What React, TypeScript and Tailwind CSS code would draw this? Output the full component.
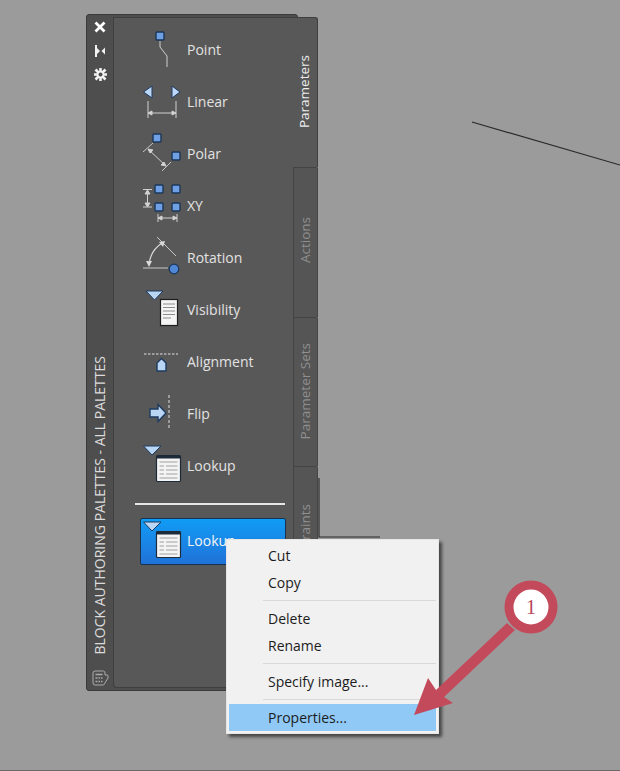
import React from 'react';

const BlueSquare = ({ x, y }: { x: number; y: number }) => (
  <rect x={x - 4} y={y - 4} width={8} height={8} rx={1} fill="#6fa0e6" stroke="#1a3658" strokeWidth={1.4} />
);

const PointIcon = () => (
  <Svg>
    <polyline points="20,17 20,23 27,32 27,43" fill="none" stroke="#cfcfcf" strokeWidth={1} />
    <BlueSquare x={20} y={12} />
  </Svg>
);

const LinearIcon = () => (
  <Svg>
    <path d="M3.5 16 L12 10 V22 Z M40 16 L32 10 V22 Z" fill="#bcd8f6" stroke="#1d3a5e" strokeWidth={1} />
    <path d="M8 25 V42 M36 25 V42 M8 37 H36 M8 37 l4 -2 v4 Z M36 37 l-4 -2 v4 Z" fill="#d8d8d8" stroke="#d0d0d0" strokeWidth={1} />
  </Svg>
);

const PolarIcon = () => (
  <Svg>
    <path d="M3 24 L13 15 M22 43 L31 34" stroke="#c8c8c8" strokeWidth={1} />
    <path d="M8 21 L26 38 M8 21 l5 1 l-3 3 Z M26 38 l-5 -1 l3 -3 Z" fill="#d8d8d8" stroke="#d0d0d0" strokeWidth={1} />
    <BlueSquare x={17} y={10} />
    <BlueSquare x={36} y={28} />
  </Svg>
);

const XYIcon = () => (
  <Svg>
    <path d="M3 9.5 H12 M3 27 H12 M7.5 9.5 V27 M7.5 10 l-2.5 4 h5 Z M7.5 27 l-2.5 -4 h5 Z" fill="#d8d8d8" stroke="#d0d0d0" strokeWidth={1} />
    <path d="M18 34 V42 M37 34 V42 M18 38 H37 M18 38 l4 -2 v4 Z M37 38 l-4 -2 v4 Z" fill="#d8d8d8" stroke="#d0d0d0" strokeWidth={1} />
    <BlueSquare x={19} y={9} />
    <BlueSquare x={36} y={9} />
    <BlueSquare x={19} y={27} />
    <BlueSquare x={36} y={27} />
  </Svg>
);

const RotationIcon = () => (
  <Svg>
    <path d="M3 36 H28 M17 5 L36 24" stroke="#c8c8c8" strokeWidth={1} fill="none" />
    <path d="M22 11 Q10 19 9 33" stroke="#d8d8d8" strokeWidth={1.2} fill="none" />
    <path d="M25 9 L19 10 L23 15 Z M9 35 L6 29 H12 Z" fill="#d8d8d8" />
    <circle cx={34} cy={37} r={4.8} fill="#4f86d6" stroke="#1a3658" strokeWidth={1.2} />
  </Svg>
);

const VisibilityIcon = () => (
  <Svg>
    <path d="M6 7 H23 L14.5 16 Z" fill="#b9d6f5" stroke="#1d3a5e" strokeWidth={1} />
    <rect x={20.5} y={15.5} width={17} height={26} fill="#f4f4f4" stroke="#1d1d1d" strokeWidth={1.2} />
    <path d="M23 20 H35 M23 23.5 H35 M23 27 H35 M23 30.5 H35 M23 34 H31" stroke="#8c8c8c" strokeWidth={1} />
  </Svg>
);

const AlignmentIcon = () => (
  <Svg>
    <path d="M4 18 H38" stroke="#e0e0e0" strokeWidth={1} strokeDasharray="2.5 1.5" />
    <path d="M17 35 V27 L21.5 22.5 L26 27 V35 Z" fill="#b9d6f5" stroke="#1d3a5e" strokeWidth={1.4} />
  </Svg>
);

const FlipIcon = () => (
  <Svg>
    <path d="M29 7 V41" stroke="#e0e0e0" strokeWidth={1} strokeDasharray="3 2" />
    <path d="M10 21 H18 V16.5 L26 25 L18 33.5 V29 H10 Z" fill="#b9d6f5" stroke="#1d3a5e" strokeWidth={1.4} />
  </Svg>
);

const LookupIcon = () => (
  <Svg>
    <path d="M3.5 6 H21 L12 15 Z" fill="#b9d6f5" stroke="#1d3a5e" strokeWidth={1} />
    <rect x={16.5} y={15.5} width={24} height={26} rx={1} fill="#f4f4f4" stroke="#1d2a38" strokeWidth={1.2} />
    <rect x={16.5} y={15.5} width={24} height={3} fill="#1d2a38" />
    <path d="M19.5 22 H37.5 M19.5 26 H24 M26 26 H37.5 M19.5 30 H24 M26 30 H37.5 M19.5 34 H24 M26 34 H37.5 M19.5 38 H37.5" stroke="#a0a0a0" strokeWidth={1} />
  </Svg>
);

const Svg = ({ children }: { children: React.ReactNode }) => (
  <svg width={47} height={52} viewBox="0 0 47 52" className="shrink-0">
    {children}
  </svg>
);

const items = [
  { label: 'Point', icon: <PointIcon /> },
  { label: 'Linear', icon: <LinearIcon /> },
  { label: 'Polar', icon: <PolarIcon /> },
  { label: 'XY', icon: <XYIcon /> },
  { label: 'Rotation', icon: <RotationIcon /> },
  { label: 'Visibility', icon: <VisibilityIcon /> },
  { label: 'Alignment', icon: <AlignmentIcon /> },
  { label: 'Flip', icon: <FlipIcon /> },
  { label: 'Lookup', icon: <LookupIcon /> },
];

const SideTab = ({ label, className }: { label: string; className: string }) => (
  <div className={`flex w-[25px] shrink-0 justify-center rounded-tr-[2px] border-t border-r border-l border-[#444444] bg-[#555555] ${className}`}>
    <span className="rotate-180 self-start whitespace-nowrap text-[13.5px] leading-none text-[#8f8f8f] [writing-mode:vertical-rl]">{label}</span>
  </div>
);

const MenuItem = ({ label, active }: { label: string; active?: boolean }) => (
  <div className={`flex h-[27px] items-center pb-[1px] pl-[39px] text-[14px] text-[#1c1c1c] ${active ? 'bg-[#90c8f6]' : ''}`}>{label}</div>
);

const MenuSeparator = () => (
  <div className="flex h-[9px] items-center pl-[34px]">
    <div className="h-px w-full bg-[#d9d9d9]" />
  </div>
);

export default function App() {
  return (
    <div className="relative h-[771px] w-[620px] overflow-hidden border-b border-[#6a6a6a] bg-[#9b9b9b] font-['Open_Sans','Noto_Sans',sans-serif]">
      {/* drawing lines behind the palette */}
      <svg width={620} height={771} className="absolute top-0 left-0">
        <line x1={472} y1={122} x2={620} y2={165} stroke="#2a2a2a" strokeWidth={1.2} />
        <path d="M319 478 V537 H380" fill="none" stroke="#2a2a2a" strokeWidth={1.2} />
      </svg>

      {/* palette */}
      <div className="absolute top-[14px] left-[86px] flex h-[677px] w-[212px] rounded-[3px] border border-[#3a3a3a] bg-[#4e4e4e]">
        <div className="flex w-[26px] shrink-0 flex-col items-center pt-[5px] pb-[4px]">
          <svg width={14} height={14} viewBox="0 0 14 14" className="mb-[10px]">
            <path d="M2.5 2.5 L11.5 11.5 M11.5 2.5 L2.5 11.5" stroke="#fff" strokeWidth={2.8} />
          </svg>
          <svg width={14} height={14} viewBox="0 0 14 14" className="mb-[9px]">
            <path d="M2 1 H4 V13 H2 Z M4 4 L7 7 L4 10 Z M12 3.5 V10.5 L8.5 7 Z" fill="#f2f2f2" />
          </svg>
          <svg width={15} height={15} viewBox="0 0 15 15">
            <path d="M7.5 1 V14 M1 7.5 H14 M2.5 2.5 L12.5 12.5 M12.5 2.5 L2.5 12.5" stroke="#f2f2f2" strokeWidth={2.6} />
            <circle cx={7.5} cy={7.5} r={3.8} fill="#f2f2f2" />
            <circle cx={7.5} cy={7.5} r={2} fill="#4e4e4e" />
          </svg>
          <div className="flex min-h-0 flex-1 items-end pb-[15px]">
            <span className="rotate-180 whitespace-nowrap text-[14px] leading-none text-[#dcdcdc] [writing-mode:vertical-rl]">BLOCK AUTHORING PALETTES - ALL PALETTES</span>
          </div>
          <svg width={17} height={16} viewBox="0 0 17 16">
            <path d="M1 3 Q1 1 3 1 H11.5 Q13 1 13 3 V5 H15 Q16 5 16 6 V8 L12 14.5 Q12 15 11 15 H3 Q1 15 1 13 Z" fill="none" stroke="#ababab" strokeWidth={1} />
            <path d="M3.5 4.5 H10.5 M3.5 8 H5.5 M6.5 8 H8 M9 8 H10.5 M3.5 11.5 H5.5 M6.5 11.5 H8 M9 11.5 H10.5" stroke="#ababab" strokeWidth={1.6} />
          </svg>
        </div>

        <div className="mt-[2px] flex h-[671px] w-[205px] shrink-0">
          <div className="flex w-[180px] shrink-0 flex-col rounded-bl-[4px] border-t border-b border-l border-[#3f3f3f] bg-[#585858] pt-[6px] pl-[26px]">
            {items.map((item) => (
              <div key={item.label} className="flex h-[52px] shrink-0 items-center text-[14px] text-[#e2e2e2]">
                {item.icon}
                <span className="pb-[2px]">{item.label}</span>
              </div>
            ))}
            <div className="mt-[11px] mb-[13px] -ml-[5px] h-[2px] w-[150px] shrink-0 bg-[#e6e6e6]" />
            <div className="flex h-[47px] w-[146px] shrink-0 items-center overflow-hidden rounded-[2px] border border-[#17324f] bg-gradient-to-b from-[#0e9cf5] to-[#1f72d8] text-[14px] text-[#f4f4f4]">
              <div className="-ml-px shrink-0">
                <LookupIcon />
              </div>
              <span className="pb-[2px]">Lookup</span>
            </div>
          </div>

          <div className="flex w-[25px] shrink-0 flex-col">
            <div className="flex h-[150px] shrink-0 justify-center rounded-tr-[3px] border-t border-r border-[#3f3f3f] bg-[#585858] pt-[37px]">
              <span className="rotate-180 self-start whitespace-nowrap text-[13.5px] leading-none text-[#ececec] [writing-mode:vertical-rl]">Parameters</span>
            </div>
            <SideTab label="Actions" className="h-[150px] pt-[49px]" />
            <SideTab label="Parameter Sets" className="h-[149px] pt-[25px]" />
            <SideTab label="Constraints" className="h-[222px] pt-[37px]" />
          </div>
        </div>
      </div>

      {/* context menu */}
      <div className="absolute top-[539px] left-[226px] w-[213px] border border-[#e6e6e6] bg-[#f1f1f1] p-[2px] shadow-[3px_3px_3px_rgba(0,0,0,0.55)]">
        <MenuItem label="Cut" />
        <MenuItem label="Copy" />
        <MenuSeparator />
        <MenuItem label="Delete" />
        <MenuItem label="Rename" />
        <MenuSeparator />
        <MenuItem label="Specify image..." />
        <MenuSeparator />
        <MenuItem label="Properties..." active />
      </div>

      {/* callout arrow */}
      <svg width={620} height={771} className="pointer-events-none absolute top-0 left-0">
        <path d="M507 623 L436 690 L428 678 L414 715 L453 703 L444 697 L515 630 Z" fill="#c34a5b" />
        <circle cx={531} cy={607} r={22} fill="#fff" stroke="#c34a5b" strokeWidth={9} />
      </svg>
      <div className="absolute top-[595px] left-[521px] flex h-[24px] w-[20px] items-center justify-center font-['Liberation_Serif',serif] text-[20px] text-[#b8475a]">1</div>
    </div>
  );
}
